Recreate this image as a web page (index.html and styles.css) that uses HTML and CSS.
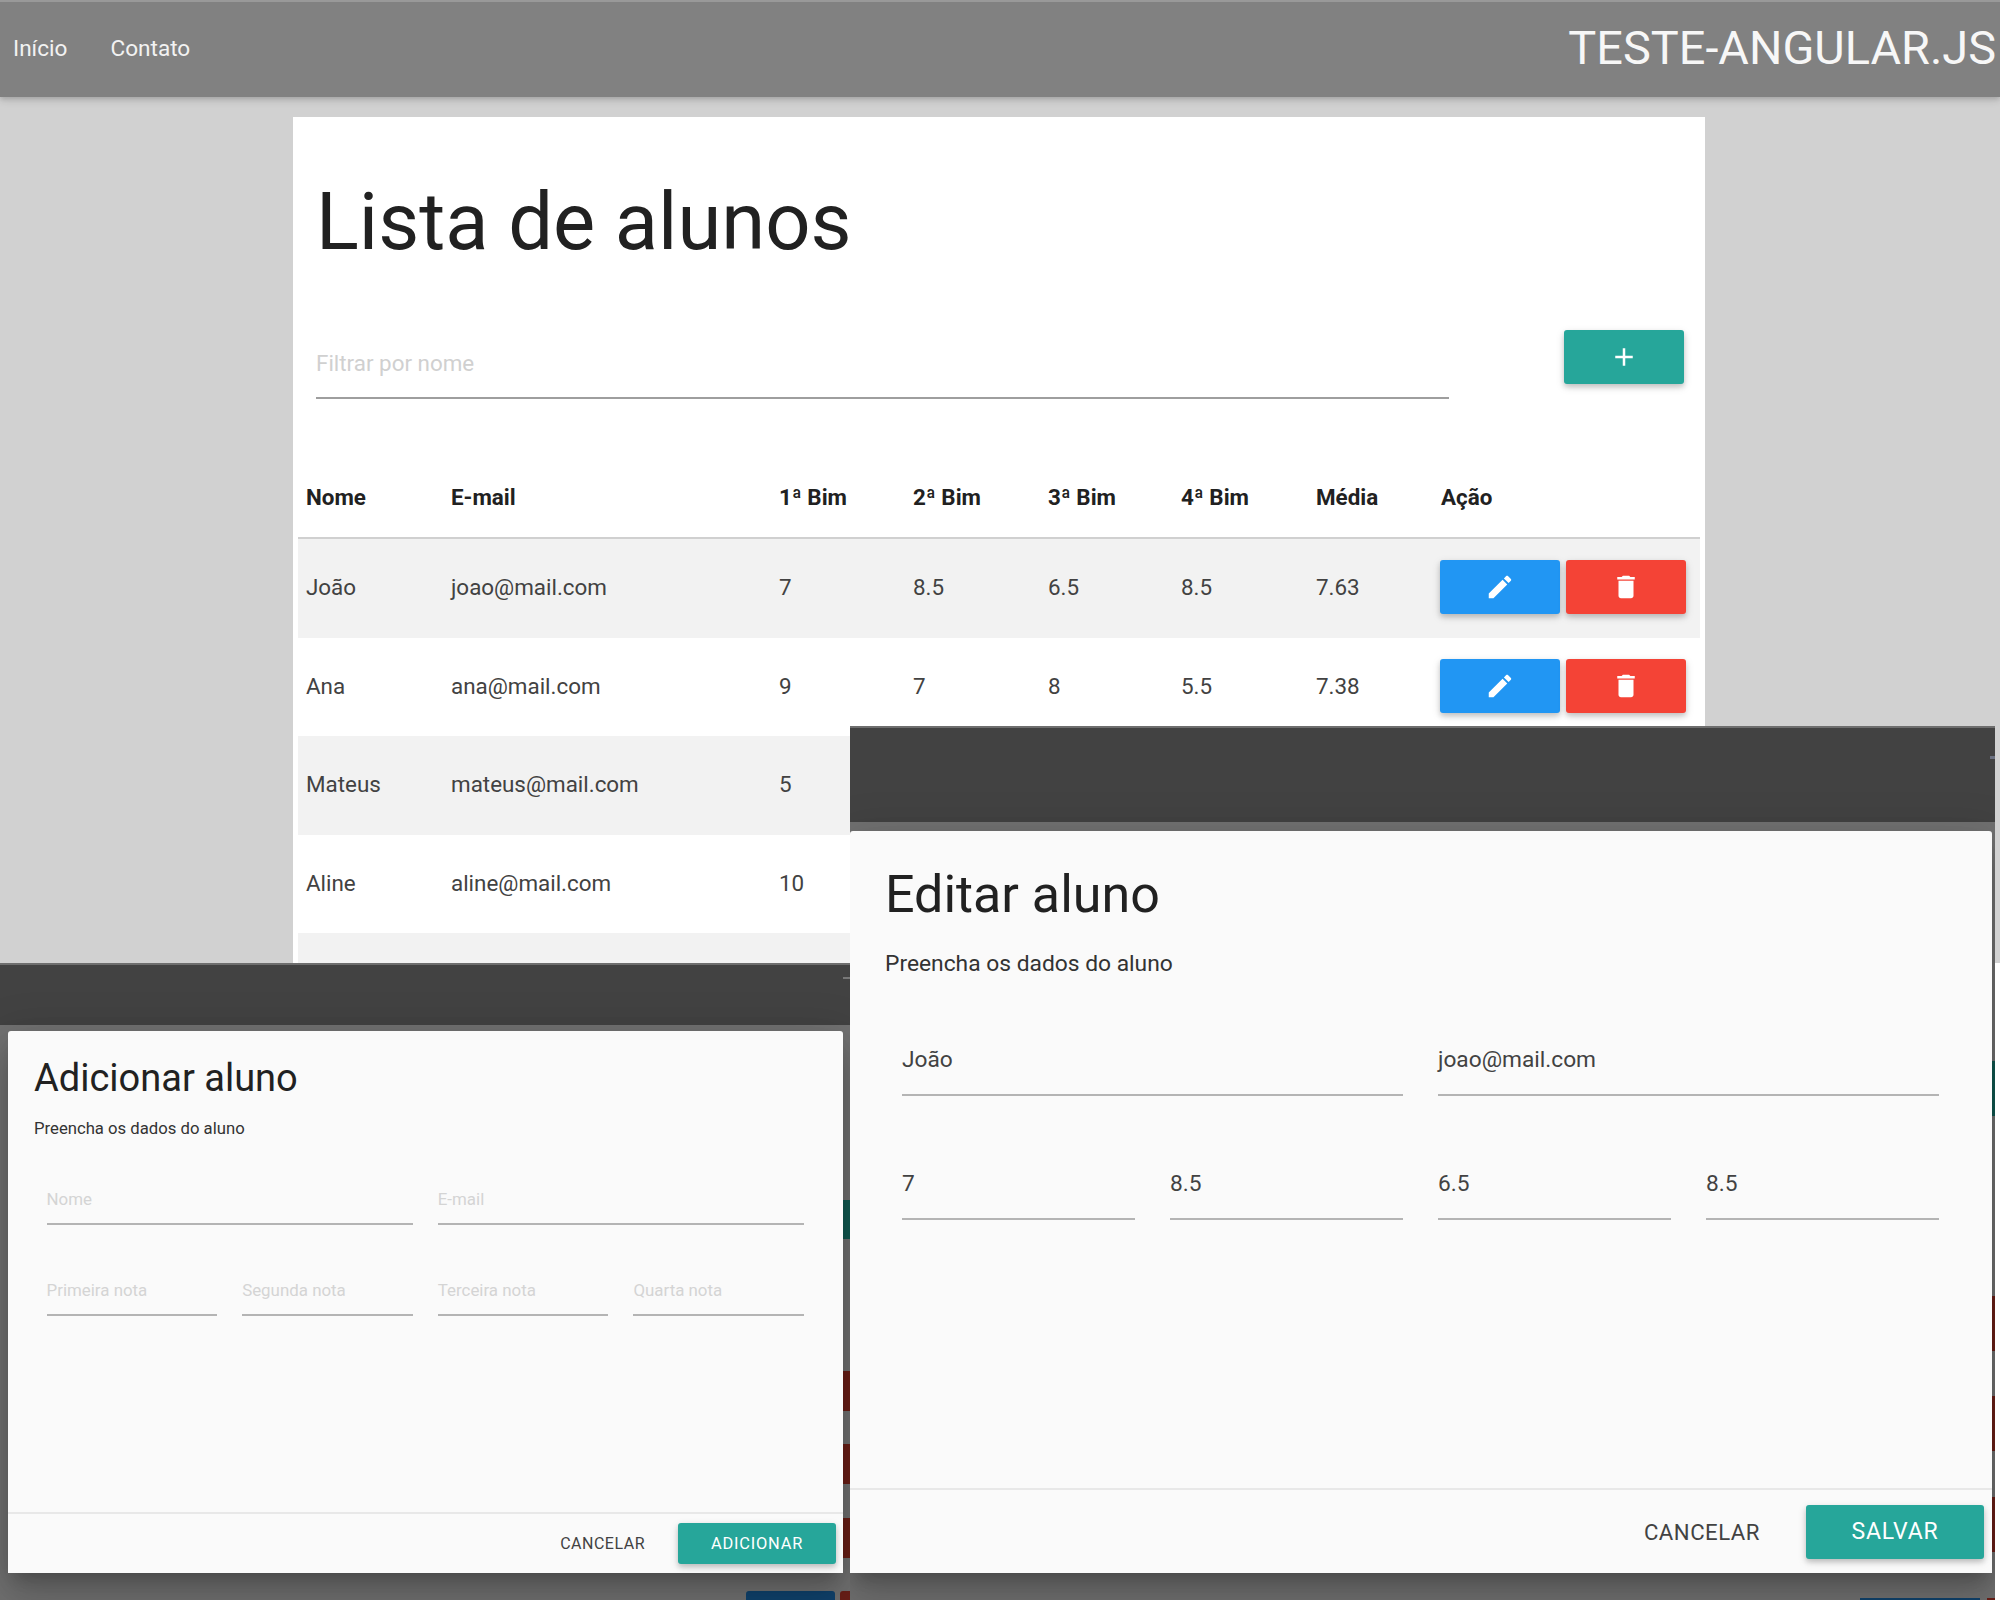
FILE: index.html
```html
<!DOCTYPE html>
<html lang="pt-BR">
<head>
  <meta charset="UTF-8">
  <title>Teste Angular.js</title>
  <link rel="stylesheet" href="styles.css">
</head>
<body>
  <nav class="navbar">
    <ul class="nav-links">
      <li>Início</li>
      <li>Contato</li>
    </ul>
    <div class="brand">TESTE-ANGULAR.JS</div>
  </nav>

  <main class="card">
    <h1 class="page-title">Lista de alunos</h1>
    <div class="filter-row">
      <div class="filter-input">Filtrar por nome</div>
      <button class="btn btn-teal btn-add">
        <svg class="icon" viewBox="0 0 24 24"><path d="M19 13h-6v6h-2v-6H5v-2h6V5h2v6h6v2z"/></svg>
      </button>
    </div>
    <table class="students">
      <thead>
        <tr>
          <th class="col-name">Nome</th>
          <th class="col-mail">E-mail</th>
          <th class="col-first">1ª Bim</th>
          <th class="col-b">2ª Bim</th>
          <th class="col-a">3ª Bim</th>
          <th class="col-b">4ª Bim</th>
          <th class="col-avg">Média</th>
          <th>Ação</th>
        </tr>
      </thead>
      <tbody>
        <tr>
          <td>João</td><td>joao@mail.com</td><td>7</td><td>8.5</td><td>6.5</td><td>8.5</td><td>7.63</td>
          <td class="actions">
            <button class="btn btn-blue"><svg class="icon" viewBox="0 0 24 24"><path d="M3 17.25V21h3.75L17.81 9.94l-3.75-3.75L3 17.25zM20.71 7.04c.39-.39.39-1.02 0-1.41l-2.34-2.34c-.39-.39-1.02-.39-1.41 0l-1.83 1.83 3.75 3.75 1.83-1.83z"/></svg></button>
            <button class="btn btn-red"><svg class="icon" viewBox="0 0 24 24"><path d="M6 19c0 1.1.9 2 2 2h8c1.1 0 2-.9 2-2V7H6v12zM19 4h-3.5l-1-1h-5l-1 1H5v2h14V4z"/></svg></button>
          </td>
        </tr>
        <tr>
          <td>Ana</td><td>ana@mail.com</td><td>9</td><td>7</td><td>8</td><td>5.5</td><td>7.38</td>
          <td class="actions">
            <button class="btn btn-blue"><svg class="icon" viewBox="0 0 24 24"><path d="M3 17.25V21h3.75L17.81 9.94l-3.75-3.75L3 17.25zM20.71 7.04c.39-.39.39-1.02 0-1.41l-2.34-2.34c-.39-.39-1.02-.39-1.41 0l-1.83 1.83 3.75 3.75 1.83-1.83z"/></svg></button>
            <button class="btn btn-red"><svg class="icon" viewBox="0 0 24 24"><path d="M6 19c0 1.1.9 2 2 2h8c1.1 0 2-.9 2-2V7H6v12zM19 4h-3.5l-1-1h-5l-1 1H5v2h14V4z"/></svg></button>
          </td>
        </tr>
        <tr><td>Mateus</td><td>mateus@mail.com</td><td>5</td><td colspan="5"></td></tr>
        <tr><td>Aline</td><td>aline@mail.com</td><td>10</td><td colspan="5"></td></tr>
        <tr><td colspan="8"></td></tr>
      </tbody>
    </table>
  </main>

  <div class="edge-strip"></div>

  <!-- pasted screenshot: add dialog -->
  <section class="shot shot-add">
    <div class="shot-head"></div>
    <i class="scrap dash"></i>
    <i class="scrap teal-a"></i>
    <i class="scrap red-a1"></i>
    <i class="scrap red-a2"></i>
    <i class="scrap red-a3"></i>
    <i class="scrap blue-a"></i>
    <i class="scrap red-a4"></i>
    <div class="modal">
      <div class="modal-body">
        <h2 class="modal-title">Adicionar aluno</h2>
        <p class="modal-sub">Preencha os dados do aluno</p>
        <div class="fields">
          <div class="field wide empty">Nome</div>
          <div class="field wide empty">E-mail</div>
          <div class="field empty">Primeira nota</div>
          <div class="field empty">Segunda nota</div>
          <div class="field empty">Terceira nota</div>
          <div class="field empty">Quarta nota</div>
        </div>
      </div>
      <div class="modal-footer">
        <button class="btn-flat">CANCELAR</button>
        <button class="btn btn-teal btn-submit">ADICIONAR</button>
      </div>
    </div>
  </section>

  <!-- pasted screenshot: edit dialog -->
  <section class="shot shot-edit">
    <div class="shot-head"></div>
    <i class="scrap dash"></i>
    <i class="scrap teal-e"></i>
    <i class="scrap red-e1"></i>
    <i class="scrap red-e2"></i>
    <i class="scrap red-e3"></i>
    <i class="scrap blue-e"></i>
    <i class="scrap red-e4"></i>
    <div class="modal">
      <div class="modal-body">
        <h2 class="modal-title">Editar aluno</h2>
        <p class="modal-sub">Preencha os dados do aluno</p>
        <div class="fields">
          <div class="field wide">João</div>
          <div class="field wide">joao@mail.com</div>
          <div class="field">7</div>
          <div class="field">8.5</div>
          <div class="field">6.5</div>
          <div class="field">8.5</div>
        </div>
      </div>
      <div class="modal-footer">
        <button class="btn-flat">CANCELAR</button>
        <button class="btn btn-teal btn-submit">SALVAR</button>
      </div>
    </div>
  </section>
</body>
</html>
```

FILE: styles.css
```css
* {
    box-sizing: border-box;
}
html, body {
    height: 1600px;
    overflow: hidden;
}
body {
    margin: 0;
    position: relative;
    background-color: #d1d1d1;
    font-family: Roboto, sans-serif;
    color: #424242;
}

/* navbar */
.navbar {
    height: 97px;
    display: flex;
    align-items: center;
    justify-content: space-between;
    background-color: #818181;
    border-top: 2px solid #999999;
    box-shadow: 0 3px 8px rgba(0,0,0,0.14), 0 2px 4px rgba(0,0,0,0.1);
    color: #ffffff;
}
.nav-links {
    display: flex;
    gap: 43px;
    list-style: none;
    margin: 0 0 3px;
    padding: 0 0 0 13px;
    font-size: 22.6px;
    color: #f2f2f2;
}
.brand {
    font-size: 46.9px;
    padding: 0 4px 4px 0;
    color: #f7f7f7;
}

/* main card */
.card {
    width: 1412px;
    height: 1483px;
    margin: 20px 0 0 293px;
    padding: 1px 5px 0;
    background: #ffffff;
}
.page-title {
    margin: 54px 0 0 18px;
    height: 100px;
    font-size: 79.5px;
    font-weight: 400;
    line-height: 100px;
    color: #212121;
}
.filter-row {
    display: flex;
    align-items: flex-start;
    margin: 58px 0 0 18px;
}
.filter-input {
    width: 1133px;
    height: 69px;
    padding-top: 21px;
    border-bottom: 2px solid #9e9e9e;
    font-size: 22.4px;
    line-height: 24px;
    color: #d0d0d0;
}
.btn {
    display: inline-flex;
    align-items: center;
    justify-content: center;
    border: 0;
    padding: 0;
    border-radius: 3px;
    color: #ffffff;
    font-family: inherit;
    box-shadow: 0 3px 5px rgba(0,0,0,0.16), 0 3px 10px rgba(0,0,0,0.12);
}
.btn-add {
    width: 120px;
    height: 54px;
    margin-left: 115px;
}
.btn-teal {
    background-color: #26a69a;
}
.btn-blue {
    background-color: #2196f3;
}
.btn-red {
    background-color: #f44336;
}
.icon {
    width: 30px;
    height: 30px;
    fill: #ffffff;
}

/* table */
.students {
    width: 1402px;
    margin-top: 58px;
    border-collapse: collapse;
    table-layout: fixed;
    font-size: 22.4px;
}
.students th {
    height: 81px;
    padding: 0 0 0 8px;
    text-align: left;
    font-weight: 700;
    color: #212121;
    border-bottom: 2px solid #d0d0d0;
}
.students td {
    height: 98.5px;
    padding: 0 0 2px 8px;
}
.students tbody tr:nth-child(odd) {
    background-color: #f2f2f2;
}
.col-name { width: 145px; }
.col-mail { width: 328px; }
.col-first { width: 134px; }
.col-a { width: 133px; }
.col-b { width: 135px; }
.col-avg { width: 125px; }
.students td.actions {
    display: flex;
    gap: 6px;
    align-items: center;
    padding-left: 7px;
}
.actions .btn {
    width: 120px;
    height: 54px;
}

.edge-strip {
    position: absolute;
    left: 1995px;
    top: 963px;
    width: 5px;
    height: 637px;
    background: #ffffff;
}

/* pasted dialog screenshots */
.shot {
    position: absolute;
    display: flex;
    flex-direction: column;
    overflow: hidden;
    background-color: #727272;
}
.shot-add {
    left: 0;
    top: 963px;
    width: 850px;
    height: 637px;
    padding: 0 0 27px;
}
.shot-edit {
    left: 850px;
    top: 726px;
    width: 1145px;
    height: 874px;
    padding: 0 0 27px;
}
.shot-head {
    flex: none;
    background-color: #424242;
    border-top: 2px solid #6e6e6e;
}
.shot-add .shot-head {
    height: 62px;
}
.shot-edit .shot-head {
    height: 96px;
}
.modal {
    position: relative;
    flex: 1;
    display: flex;
    flex-direction: column;
    background-color: #fafafa;
    border-radius: 3px 3px 0 0;
    box-shadow: 0 11px 15px -7px rgba(0,0,0,0.2), 0 24px 38px 3px rgba(0,0,0,0.14), 0 9px 46px 8px rgba(0,0,0,0.12);
}
.shot-add .modal {
    margin: 6px 7px 0 8px;
}
.shot-edit .modal {
    margin: 9px 3px 0 0;
}
.modal-body {
    flex: 1;
}
.modal-title {
    margin: 0;
    font-weight: 400;
    color: #212121;
}
.modal-sub {
    margin: 0;
    color: #333333;
}
.fields {
    display: grid;
    grid-template-columns: repeat(4, 1fr);
}
.field {
    display: flex;
    align-items: center;
    border-bottom: 2px solid #b4b4b4;
}
.field.wide {
    grid-column: span 2;
}
.field.empty {
    color: #d4d4d4;
}
.modal-footer {
    flex: none;
    display: flex;
    align-items: center;
    justify-content: flex-end;
    border-top: 2px solid #e8e8e8;
}
.btn-flat {
    border: 0;
    padding: 0;
    background: none;
    font-family: inherit;
    color: #424242;
    letter-spacing: 0.5px;
}
.btn-submit {
    letter-spacing: 0.8px;
}

/* add dialog sizes */
.shot-add .modal-body {
    padding: 22px 39px 0 26px;
}
.shot-add .modal-title {
    font-size: 38px;
    line-height: 50px;
}
.shot-add .modal-sub {
    margin-top: 14px;
    font-size: 16.7px;
    line-height: 24px;
}
.shot-add .fields {
    margin: 34px 0 0 12.5px;
    gap: 41px 25px;
}
.shot-add .field {
    height: 50px;
    font-size: 16.9px;
}
.shot-add .modal-footer {
    height: 61px;
    padding-right: 7px;
}
.shot-add .btn-flat {
    margin-right: 33px;
    font-size: 16px;
}
.shot-add .btn-submit {
    width: 158px;
    height: 41px;
    font-size: 16.4px;
}

/* edit dialog sizes */
.shot-edit .modal-body {
    padding: 29px 53px 0 35px;
}
.shot-edit .modal-title {
    font-size: 52px;
    line-height: 70px;
}
.shot-edit .modal-sub {
    margin-top: 19px;
    font-size: 22.8px;
    line-height: 30px;
}
.shot-edit .fields {
    margin: 45px 0 0 17px;
    gap: 52px 35px;
}
.shot-edit .field {
    height: 72px;
    font-size: 22.7px;
}
.shot-edit .modal-footer {
    height: 85px;
    padding-right: 8px;
}
.shot-edit .btn-flat {
    margin-right: 46px;
    font-size: 22.2px;
}
.shot-edit .btn-submit {
    width: 178px;
    height: 54px;
    font-size: 23px;
}

/* bits of the page behind the scrim */
.scrap {
    position: absolute;
    display: block;
}
.shot-add .dash { left: 843px; top: 14px; width: 7px; height: 2px; background: #777777; }
.shot-edit .dash { left: 1140px; top: 30px; width: 5px; height: 3px; background: #6a7080; }
.teal-a { left: 843px; top: 237px; width: 7px; height: 39px; background: #115a52; }
.red-a1 { left: 843px; top: 408px; width: 7px; height: 40px; background: #6b1f17; }
.red-a2 { left: 843px; top: 481px; width: 7px; height: 40px; background: #6b1f17; }
.red-a3 { left: 843px; top: 555px; width: 7px; height: 40px; background: #6b1f17; }
.blue-a { left: 746px; top: 628px; width: 89px; height: 9px; background: #10436e; border-radius: 3px 3px 0 0; }
.red-a4 { left: 840px; top: 628px; width: 10px; height: 9px; background: #6b1f17; border-radius: 3px 0 0 0; }
.teal-e { left: 1142px; top: 335px; width: 3px; height: 55px; background: #115a52; }
.red-e1 { left: 1142px; top: 570px; width: 3px; height: 55px; background: #6b1f17; }
.red-e2 { left: 1142px; top: 670px; width: 3px; height: 55px; background: #6b1f17; }
.red-e3 { left: 1142px; top: 771px; width: 3px; height: 55px; background: #6b1f17; }
.blue-e { left: 1010px; top: 872px; width: 120px; height: 2px; background: #10436e; }
.red-e4 { left: 1137px; top: 872px; width: 8px; height: 2px; background: #6b1f17; }
```
